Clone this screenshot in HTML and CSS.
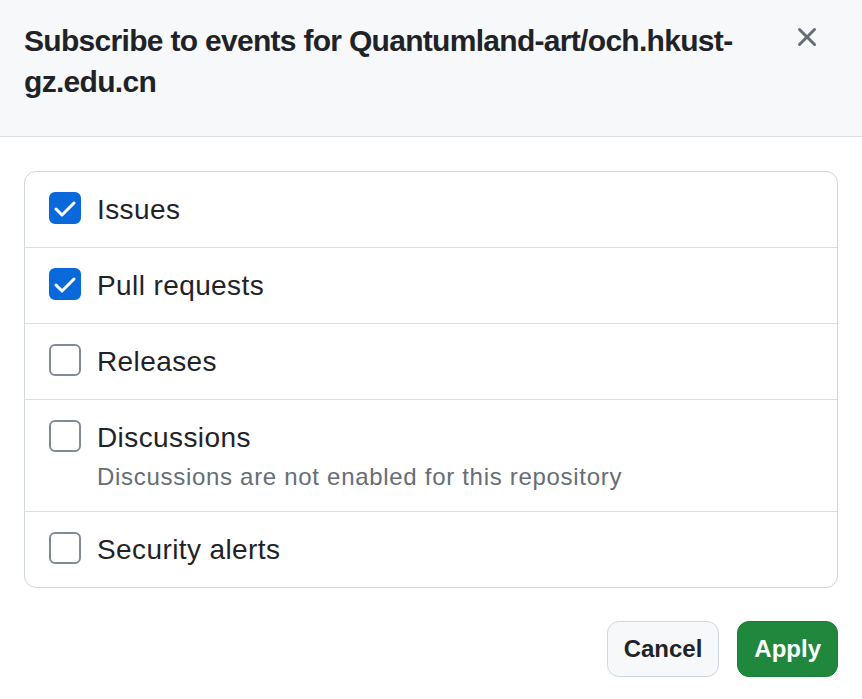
FILE: index.html
```html
<!DOCTYPE html>
<html lang="en">
<head>
    <meta charset="UTF-8">
    <title>Subscribe to events</title>
    <link rel="stylesheet" href="styles.css">
</head>
<body>
    <div class="dialog">
        <!-- Header -->
        <div class="dialog-header">
            <h1 class="dialog-title">Subscribe to events for Quantumland-art/och.hkust-gz.edu.cn</h1>
            <button class="close-btn" aria-label="Close">
                <svg width="32" height="32" viewBox="0 0 16 16" fill="currentColor">
                    <path d="M3.72 3.72a.75.75 0 0 1 1.06 0L8 6.94l3.22-3.22a.749.749 0 0 1 1.275.326.749.749 0 0 1-.215.734L9.06 8l3.22 3.22a.749.749 0 0 1-.326 1.275.749.749 0 0 1-.734-.215L8 9.06l-3.22 3.22a.751.751 0 0 1-1.042-.018.751.751 0 0 1-.018-1.042L6.94 8 3.72 4.78a.75.75 0 0 1 0-1.06Z"></path>
                </svg>
            </button>
        </div>

        <!-- Event list -->
        <div class="dialog-body">
            <ul class="event-list">
                <li class="event-item">
                    <span class="checkbox checked">
                        <svg width="32" height="32" viewBox="0 0 32 32"><polyline points="7,17 13,23 25,11" fill="none" stroke="#fff" stroke-width="3" stroke-linecap="round" stroke-linejoin="round"/></svg>
                    </span>
                    <div class="event-text">
                        <div class="event-name">Issues</div>
                    </div>
                </li>
                <li class="event-item">
                    <span class="checkbox checked">
                        <svg width="32" height="32" viewBox="0 0 32 32"><polyline points="7,17 13,23 25,11" fill="none" stroke="#fff" stroke-width="3" stroke-linecap="round" stroke-linejoin="round"/></svg>
                    </span>
                    <div class="event-text">
                        <div class="event-name">Pull requests</div>
                    </div>
                </li>
                <li class="event-item">
                    <span class="checkbox"></span>
                    <div class="event-text">
                        <div class="event-name">Releases</div>
                    </div>
                </li>
                <li class="event-item">
                    <span class="checkbox"></span>
                    <div class="event-text">
                        <div class="event-name">Discussions</div>
                        <div class="event-note">Discussions are not enabled for this repository</div>
                    </div>
                </li>
                <li class="event-item">
                    <span class="checkbox"></span>
                    <div class="event-text">
                        <div class="event-name">Security alerts</div>
                    </div>
                </li>
            </ul>
        </div>

        <!-- Footer -->
        <div class="dialog-footer">
            <button class="btn">Cancel</button>
            <button class="btn btn-primary">Apply</button>
        </div>
    </div>
</body>
</html>
```

FILE: styles.css
```css
* {
    box-sizing: border-box;
    margin: 0;
    padding: 0;
}
body {
    font-family: "Liberation Sans", Arial, sans-serif;
    color: #1f2328;
    background: #ffffff;
}
.dialog {
    width: 862px;
}
.dialog-header {
    display: flex;
    align-items: flex-start;
    background-color: #f6f8fa;
    border-bottom: 1px solid #d8dee4;
    padding: 13px 23px 34px 24px;
}
.dialog-title {
    flex: 1;
    font-size: 30px;
    font-weight: bold;
    line-height: 41px;
    letter-spacing: -0.7px;
    margin-top: 7px;
}
.close-btn {
    width: 64px;
    height: 48px;
    border: none;
    background: none;
    color: #656d76;
    display: flex;
    align-items: center;
    justify-content: center;
    cursor: pointer;
}
.dialog-body {
    padding: 34px 24px 0;
}
.event-list {
    list-style: none;
    border: 1px solid #d0d7de;
    border-radius: 12px;
}
.event-item {
    display: flex;
    align-items: flex-start;
    gap: 16px;
    padding: 16px 24px;
    border-bottom: 1px solid #d8dee4;
}
.event-item:last-child {
    border-bottom: none;
}
.checkbox {
    width: 32px;
    height: 32px;
    margin-top: 4px;
    border: 2px solid #818b98;
    border-radius: 6px;
    background: #ffffff;
    flex-shrink: 0;
    display: flex;
}
.checkbox.checked {
    background: #0969da;
    border-color: #0969da;
}
.checkbox svg {
    margin: -2px;
}
.event-name {
    font-size: 28px;
    line-height: 43px;
    letter-spacing: 0.4px;
}
.event-note {
    font-size: 24px;
    line-height: 36px;
    letter-spacing: 0.7px;
    color: #656d76;
}
.dialog-footer {
    display: flex;
    justify-content: flex-end;
    gap: 18px;
    padding: 33px 24px 23px;
}
.btn {
    height: 56px;
    padding: 0 16px;
    font-family: "Liberation Sans", Arial, sans-serif;
    font-size: 24px;
    font-weight: bold;
    color: #1f2328;
    background-color: #f6f8fa;
    border: 1px solid #d0d7de;
    border-radius: 12px;
    cursor: pointer;
}
.btn-primary {
    color: #ffffff;
    background-color: #1f883d;
    border-color: #1a7f37;
}
```
